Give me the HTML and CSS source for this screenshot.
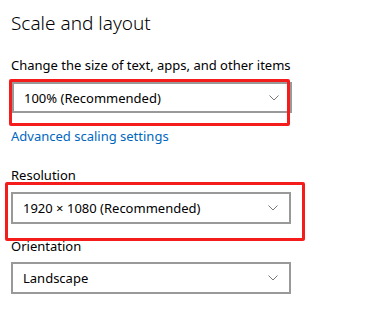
FILE: index.html
```html
<!DOCTYPE html>
<html lang="en">
<head>
    <meta charset="UTF-8">
    <meta name="viewport" content="width=device-width, initial-scale=1.0">
    <title>Display - Scale and layout</title>
    <link rel="stylesheet" href="styles.css">
</head>
<body>
    <main class="panel">
        <h1 class="title">Scale and layout</h1>

        <div class="field field-scale">
            <div class="field-label">Change the size of text, apps, and other items</div>
            <div class="select">
                <span>100% (Recommended)</span>
                <svg class="chevron" width="10" height="6" viewBox="0 0 10 6"><path d="M0.5 0.5 L5 5 L9.5 0.5" fill="none" stroke="#777" stroke-width="1"/></svg>
                <span class="mark mark-scale"></span>
            </div>
        </div>

        <a class="link" href="#">Advanced scaling settings</a>

        <div class="field field-resolution">
            <div class="field-label">Resolution</div>
            <div class="select">
                <span>1920 × 1080 (Recommended)</span>
                <svg class="chevron" width="10" height="6" viewBox="0 0 10 6"><path d="M0.5 0.5 L5 5 L9.5 0.5" fill="none" stroke="#777" stroke-width="1"/></svg>
                <span class="mark mark-resolution"></span>
            </div>
        </div>

        <div class="field field-orientation">
            <div class="field-label">Orientation</div>
            <div class="select">
                <span>Landscape</span>
                <svg class="chevron" width="10" height="6" viewBox="0 0 10 6"><path d="M0.5 0.5 L5 5 L9.5 0.5" fill="none" stroke="#777" stroke-width="1"/></svg>
            </div>
        </div>
    </main>
</body>
</html>
```

FILE: styles.css
```css
body {
    margin: 0;
    background: #fff;
    color: #000;
    font-family: "Noto Sans", "Open Sans", Arial, sans-serif;
    font-size: 13px;
}
.panel {
    padding: 0 0 0 11px;
    display: flex;
    flex-direction: column;
}
.title {
    margin: 10px 0 0 0;
    font-size: 19px;
    font-weight: 300;
    line-height: 26px;
}
.field {
    display: flex;
    flex-direction: column;
}
.field-label {
    line-height: 18px;
}
.field-scale {
    margin-top: 20px;
}
.field-resolution {
    margin-top: 21px;
}
.field-orientation {
    margin-top: 13px;
}
.select {
    position: relative;
    box-sizing: border-box;
    width: 280px;
    height: 32px;
    border: 2px solid #999;
    margin-top: 8px;
    padding: 0 0 0 10px;
    display: flex;
    align-items: center;
    justify-content: space-between;
}
.field-scale .select {
    margin-left: 1px;
    height: 31px;
}
.field-orientation .select {
    margin-top: 7px;
}
.chevron {
    margin-right: 11px;
}
.link {
    margin-top: 14px;
    color: #0067c0;
    text-decoration: none;
    line-height: 18px;
    align-self: flex-start;
}
.mark {
    position: absolute;
    border: 3px solid #f51c1c;
    border-radius: 2px;
}
.mark-scale {
    left: -5px;
    top: -5px;
    right: 0;
    bottom: -15px;
}
.mark-resolution {
    left: -8px;
    top: -12px;
    right: -16px;
    bottom: -19px;
}
```
